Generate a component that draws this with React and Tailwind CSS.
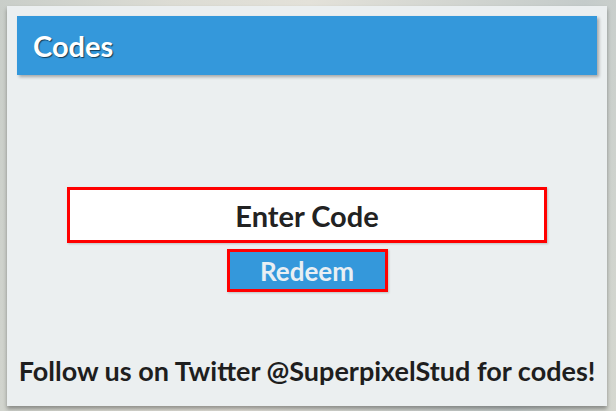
export default function App() {
  const font = { fontFamily: '"Lato", "Open Sans", sans-serif' };
  return (
    <div
      className="w-[616px] h-[411px] overflow-hidden pt-[6px] pl-[7px] bg-[linear-gradient(100deg,#c9cec9_0%,#dcdcd4_25%,#e3e1d9_45%,#cfd3cf_70%,#c4cbca_85%,#d6d8d0_100%)]"
      style={font}
    >
      <div className="w-[600px] h-[400px] bg-[#ebeff0] p-[10px] flex flex-col items-center shadow-[0_3px_4px_rgba(0,0,0,0.35)]">
        <div className="w-full h-[59px] bg-[#3498db] shrink-0 flex items-center pl-[16px] shadow-[2px_2px_3px_rgba(0,0,0,0.3)]">
          <span className="text-white text-[29px] font-bold leading-none [text-shadow:1px_1px_1px_rgba(0,0,0,0.6)]">
            Codes
          </span>
        </div>
        <div className="mt-[112px] w-[480px] h-[56px] bg-white border-[3px] border-[#ff0000] flex items-center justify-center shadow-[1px_1px_2px_rgba(0,0,0,0.2)]">
          <span className="text-[#222222] text-[29px] font-bold leading-none">Enter Code</span>
        </div>
        <div className="mt-[6px] w-[161px] h-[43px] bg-[#3498db] border-[3px] border-[#ff0000] flex items-center justify-center shadow-[1px_1px_2px_rgba(0,0,0,0.2)]">
          <span className="text-[#e9eff3] text-[26px] font-bold leading-none">Redeem</span>
        </div>
        <div className="mt-auto mb-[12px] text-[#1e1e1e] text-[27px] font-bold leading-none whitespace-nowrap">
          Follow us on Twitter @SuperpixelStud for codes!
        </div>
      </div>
    </div>
  );
}
